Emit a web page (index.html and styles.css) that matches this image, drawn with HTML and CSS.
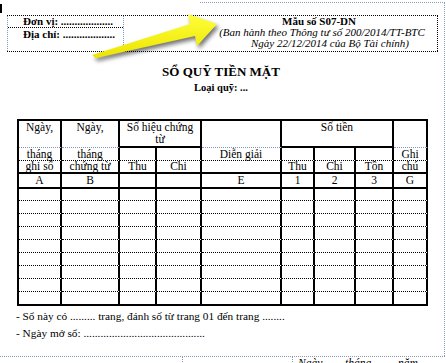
FILE: index.html
```html
<!DOCTYPE html>
<html lang="vi">
<head>
<meta charset="utf-8">
<title>Sổ quỹ tiền mặt</title>
<link rel="stylesheet" href="styles.css">
</head>
<body>
<div class="page">
  <div class="cursor"></div>
  <div class="hdr">
    <div class="unit">
      <div class="unit-row">Đơn vị: ...................</div>
      <div class="unit-row">Địa chỉ: ...................</div>
    </div>
    <div class="gap"></div>
    <div class="form">
      <div class="form-code">Mẫu số S07-DN</div>
      <div class="form-note l1">(Ban hành theo Thông tư số 200/2014/TT-BTC</div>
      <div class="form-note l2">Ngày 22/12/2014 của Bộ Tài chính)</div>
    </div>
  </div>

  <h1 class="title">SỔ QUỸ TIỀN MẶT</h1>
  <div class="kind">Loại quỹ: ...</div>

  <div class="ledger">
    <div class="c top grid-b">Ngày,</div>
    <div class="c top grid-b">Ngày,</div>
    <div class="c top solid-b span2">Số hiệu chứng<br>từ</div>
    <div class="c top grid-b"></div>
    <div class="c top solid-b span3">Số tiền</div>
    <div class="c top grid-b"></div>

    <div class="c dot-b">tháng</div>
    <div class="c dot-b">tháng</div>
    <div class="c dot-b"></div>
    <div class="c dot-b"></div>
    <div class="c dot-b">Diễn giải</div>
    <div class="c dot-b"></div>
    <div class="c dot-b"></div>
    <div class="c dot-b"></div>
    <div class="c dot-b">Ghi</div>

    <div class="c solid-b">ghi sổ</div>
    <div class="c solid-b">chứng từ</div>
    <div class="c solid-b">Thu</div>
    <div class="c solid-b">Chi</div>
    <div class="c solid-b"></div>
    <div class="c solid-b">Thu</div>
    <div class="c solid-b">Chi</div>
    <div class="c solid-b">Tồn</div>
    <div class="c solid-b">chú</div>

    <div class="c solid-b">A</div>
    <div class="c solid-b">B</div>
    <div class="c solid-b"></div>
    <div class="c solid-b"></div>
    <div class="c solid-b">E</div>
    <div class="c solid-b">1</div>
    <div class="c solid-b">2</div>
    <div class="c solid-b">3</div>
    <div class="c solid-b">G</div>
  </div>

  <p class="note">- Sổ này có ......... trang, đánh số từ trang 01 đến trang ........</p>
  <p class="note">- Ngày mở sổ: ...........................................</p>

  <div class="sign">
    <div class="sign-cell w1"></div>
    <div class="sign-cell w2"></div>
    <div class="sign-cell date"><span>Ngày</span><span>tháng</span><span>năm</span></div>
  </div>

  <div class="edge-top"></div>
  <div class="edge-right"></div>

  <svg class="arrow" viewBox="0 0 230 70" width="230" height="70" aria-hidden="true">
    <defs>
      <linearGradient id="yel" x1="0" y1="0" x2="0" y2="1">
        <stop offset="0" stop-color="#ffff3a"/>
        <stop offset="1" stop-color="#ece400"/>
      </linearGradient>
    </defs>
    <polygon points="92,55 190,24 188,14 217,24 197,46 195,36 96,58" fill="url(#yel)"/>
  </svg>
</div>
<script>
  // build the empty data rows of the ledger
  (function () {
    var ledger = document.querySelector('.ledger');
    for (var r = 0; r < 9; r++) {
      for (var c = 0; c < 9; c++) {
        var d = document.createElement('div');
        d.className = 'c ' + (r === 8 ? 'solid-b' : 'dot-b');
        ledger.appendChild(d);
      }
    }
  })();
</script>
</body>
</html>
```

FILE: styles.css
```css
* { box-sizing: border-box; }

body {
  margin: 0;
  background: #fff;
  color: #000;
  font-family: "Liberation Serif", "Times New Roman", serif;
}

.page {
  position: relative;
  width: 446px;
  height: 363px;
  overflow: hidden;
}

.cursor {
  width: 2px;
  height: 9px;
  margin-top: 4px;
  background: #000;
}

/* header box */
.hdr {
  display: flex;
  margin: 2px 0 0 7px;
  width: 431px;
  height: 37px;
  border-top: 1px dotted #000;
  border-bottom: 1px dotted #000;
}

.unit {
  width: 117px;
  border-left: 1px dotted #7d98c4;
  border-right: 1px dotted #7d98c4;
  font-size: 11px;
  font-weight: bold;
}

.unit-row {
  height: 12px;
  line-height: 11px;
  padding-left: 15px;
  border-bottom: 1px dotted #000;
  white-space: nowrap;
}

.unit-row + .unit-row {
  border-bottom: none;
  line-height: 12px;
}

.gap { width: 77px; }

.form {
  flex: 1;
  border-right: 1px dotted #000;
  text-align: center;
  font-size: 11px;
  line-height: 11px;
}

.form-code { font-weight: bold; }

.form-note {
  font-style: italic;
  white-space: nowrap;
}

.form-note.l1 { padding-left: 6px; }
.form-note.l2 { padding-left: 22px; }

/* title */
.title {
  width: 442px;
  margin: 12px 0 0;
  font-size: 13px;
  line-height: 16px;
  text-align: center;
  font-weight: bold;
}

.kind {
  width: 442px;
  margin-top: 2px;
  font-size: 10.5px;
  line-height: 12px;
  font-weight: bold;
  text-align: center;
}

/* ledger grid */
.ledger {
  display: grid;
  grid-template-columns: 43px 58px 37px 45px 80px 33px 41px 38px 34px;
  grid-template-rows: 27px 13px 13px 15px 12px 13px 13px 13px 13px 13px 13px 13px 14px;
  width: 411px;
  margin: 25px 0 0 17px;
  border-left: 2px solid #000;
  border-top: 2px solid #000;
  font-size: 11.5px;
  line-height: 11px;
}

.c {
  display: flex;
  align-items: center;
  justify-content: center;
  text-align: center;
  white-space: nowrap;
  border-right: 2px solid #000;
}

.c.top {
  align-items: flex-start;
  line-height: 12px;
}

.span2 { grid-column: span 2; }
.span3 { grid-column: span 3; }

.grid-b { border-bottom: 1px dotted #7d98c4; }
.solid-b { border-bottom: 2px solid #000; }
.dot-b { border-bottom: 1px dotted #000; }

/* notes */
.note {
  margin: 3px 0 0 16px;
  font-size: 11.3px;
  line-height: 14px;
  white-space: nowrap;
}

/* signature strip */
.sign {
  display: flex;
  width: 445px;
  height: 20px;
  margin-top: 16px;
  border-top: 1px dotted #8a9bb5;
}

.sign-cell { border-right: 1px dotted #8a9bb5; }
.w1 { width: 183px; }
.w2 { width: 110px; }

.date {
  flex: 1;
  border-right: none;
  display: flex;
  padding-left: 5px;
  font-size: 11.5px;
  font-style: italic;
  line-height: 13px;
}

.date span:nth-child(1) { width: 47px; }
.date span:nth-child(2) { width: 53px; }

/* page boundary marks */
.edge-top {
  position: absolute;
  left: 200px;
  top: 2px;
  width: 245px;
  border-top: 1px dotted #8a9bb5;
}

.edge-right {
  position: absolute;
  left: 444px;
  top: 2px;
  height: 354px;
  border-left: 1px dotted #8a9bb5;
}

/* yellow callout arrow */
.arrow {
  position: absolute;
  left: 0;
  top: 0;
  filter: drop-shadow(2px 3px 2px rgba(0, 0, 0, 0.55));
}
```
